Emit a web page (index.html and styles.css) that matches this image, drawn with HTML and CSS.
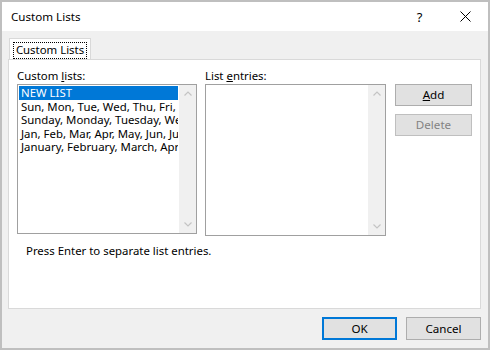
FILE: index.html
```html
<!DOCTYPE html>
<html lang="en">
<head>
    <meta charset="UTF-8">
    <title>Custom Lists</title>
    <link rel="stylesheet" href="styles.css">
</head>
<body>
    <div class="window">
        <div class="titlebar">
            <span class="title">Custom Lists</span>
            <span class="caption-btn help">?</span>
            <span class="caption-btn close">
                <svg width="11" height="11" viewBox="0 0 11 11">
                    <path d="M0.5 0.5 L10.5 10.5 M10.5 0.5 L0.5 10.5" stroke="#000" stroke-width="1" fill="none"/>
                </svg>
            </span>
        </div>

        <div class="dialog-body">
            <div class="tabs">
                <div class="tab"><span class="tab-focus">Custom Lists</span></div>
            </div>

            <div class="panel">
                <div class="columns">
                    <div class="col col-left">
                        <div class="label">Custom <u>l</u>ists:</div>
                        <div class="listbox listbox-left">
                            <div class="items">
                                <div class="item selected">NEW LIST</div>
                                <div class="item">Sun, Mon, Tue, Wed, Thu, Fri, Sat</div>
                                <div class="item">Sunday, Monday, Tuesday, Wednesday</div>
                                <div class="item">Jan, Feb, Mar, Apr, May, Jun, Jul</div>
                                <div class="item">January, February, March, April</div>
                            </div>
                            <div class="scrollbar">
                                <div class="arrow"><svg width="8" height="5" viewBox="0 0 8 5"><path d="M0.5 4.5 L4 1 L7.5 4.5" stroke="#c4c4c4" stroke-width="1.2" fill="none"/></svg></div>
                                <div class="arrow"><svg width="8" height="5" viewBox="0 0 8 5"><path d="M0.5 0.5 L4 4 L7.5 0.5" stroke="#c4c4c4" stroke-width="1.2" fill="none"/></svg></div>
                            </div>
                        </div>
                        <div class="hint">Press Enter to separate list entries.</div>
                    </div>

                    <div class="col col-mid">
                        <div class="label">List <u>e</u>ntries:</div>
                        <div class="listbox listbox-right">
                            <div class="items"></div>
                            <div class="scrollbar">
                                <div class="arrow"><svg width="8" height="5" viewBox="0 0 8 5"><path d="M0.5 4.5 L4 1 L7.5 4.5" stroke="#c4c4c4" stroke-width="1.2" fill="none"/></svg></div>
                                <div class="arrow"><svg width="8" height="5" viewBox="0 0 8 5"><path d="M0.5 0.5 L4 4 L7.5 0.5" stroke="#c4c4c4" stroke-width="1.2" fill="none"/></svg></div>
                            </div>
                        </div>
                    </div>

                    <div class="col col-right">
                        <button class="btn"><u>A</u>dd</button>
                        <button class="btn disabled">Delete</button>
                    </div>
                </div>
            </div>

            <div class="footer">
                <button class="btn btn-footer default">OK</button>
                <button class="btn btn-footer">Cancel</button>
            </div>
        </div>
    </div>
</body>
</html>
```

FILE: styles.css
```css
html, body {
    margin: 0;
    padding: 0;
}
body {
    font-family: "Noto Sans", "Open Sans", sans-serif;
    font-size: 11.4px;
    color: #000;
    background: #fff;
}
.window {
    width: 490px;
    height: 350px;
    box-sizing: border-box;
    border: 2px solid #bfbfbf;
    display: flex;
    flex-direction: column;
}
.titlebar {
    height: 29px;
    background: #fff;
    display: flex;
    align-items: center;
}
.title {
    flex: 1;
    padding-left: 9px;
    font-size: 11.6px;
}
.caption-btn {
    width: 45px;
    height: 29px;
    display: flex;
    align-items: center;
    justify-content: center;
}
.help {
    font-size: 13px;
    padding-left: 2px;
}
.close {
    width: 46px;
}
.dialog-body {
    flex: 1;
    background: #f0f0f0;
    padding: 7px 7px 0 6px;
}
.tabs {
    display: flex;
    height: 21px;
}
.tab {
    position: relative;
    margin-left: 1px;
    width: 82px;
    height: 21px;
    box-sizing: border-box;
    border: 1px solid #d9d9d9;
    border-bottom: none;
    background: #fff;
    padding: 3px 0 0 3px;
    z-index: 1;
}
.tab-focus {
    display: block;
    width: 74px;
    height: 17px;
    box-sizing: border-box;
    border: 1px dotted #000;
    line-height: 14px;
    text-align: center;
}
.panel {
    height: 250px;
    box-sizing: border-box;
    border: 1px solid #d9d9d9;
    background: #fff;
    padding: 8px 8px 0 8px;
}
.columns {
    display: flex;
}
.col-left {
    width: 180px;
}
.col-mid {
    width: 181px;
    margin-left: 8px;
}
.col-right {
    width: 77px;
    margin-left: 9px;
    padding-top: 16px;
    display: flex;
    flex-direction: column;
    gap: 8px;
}
.label {
    height: 16px;
    line-height: 16px;
}
.listbox {
    box-sizing: border-box;
    border: 1px solid #a0a0a0;
    display: flex;
    background: #fff;
}
.listbox-left {
    height: 150px;
}
.listbox-right {
    height: 152px;
}
.items {
    flex: 1;
    overflow: hidden;
    padding: 1px 1px 0 1px;
}
.item {
    height: 13.5px;
    line-height: 13.5px;
    padding-left: 2px;
    white-space: nowrap;
    overflow: hidden;
}
.item.selected {
    background: #0078d7;
    color: #fff;
}
.scrollbar {
    width: 17px;
    background: #f0f0f0;
    display: flex;
    flex-direction: column;
    justify-content: space-between;
}
.arrow {
    height: 17px;
    display: flex;
    align-items: center;
    justify-content: center;
}
.hint {
    margin-top: 9px;
    margin-left: 9px;
    line-height: 16px;
    white-space: nowrap;
}
.btn {
    font-family: "Noto Sans", "Open Sans", sans-serif;
    font-size: 11.6px;
    height: 22px;
    box-sizing: border-box;
    background: #e1e1e1;
    border: 1px solid #adadad;
    color: #000;
    padding: 0;
    line-height: 18px;
}
.btn.disabled {
    border-color: #bfbfbf;
    color: #838383;
}
.footer {
    display: flex;
    justify-content: flex-end;
    gap: 9px;
    padding-top: 8px;
}
.btn-footer {
    width: 75px;
    height: 23px;
}
.btn-footer.default {
    border: 2px solid #0078d7;
}
```
